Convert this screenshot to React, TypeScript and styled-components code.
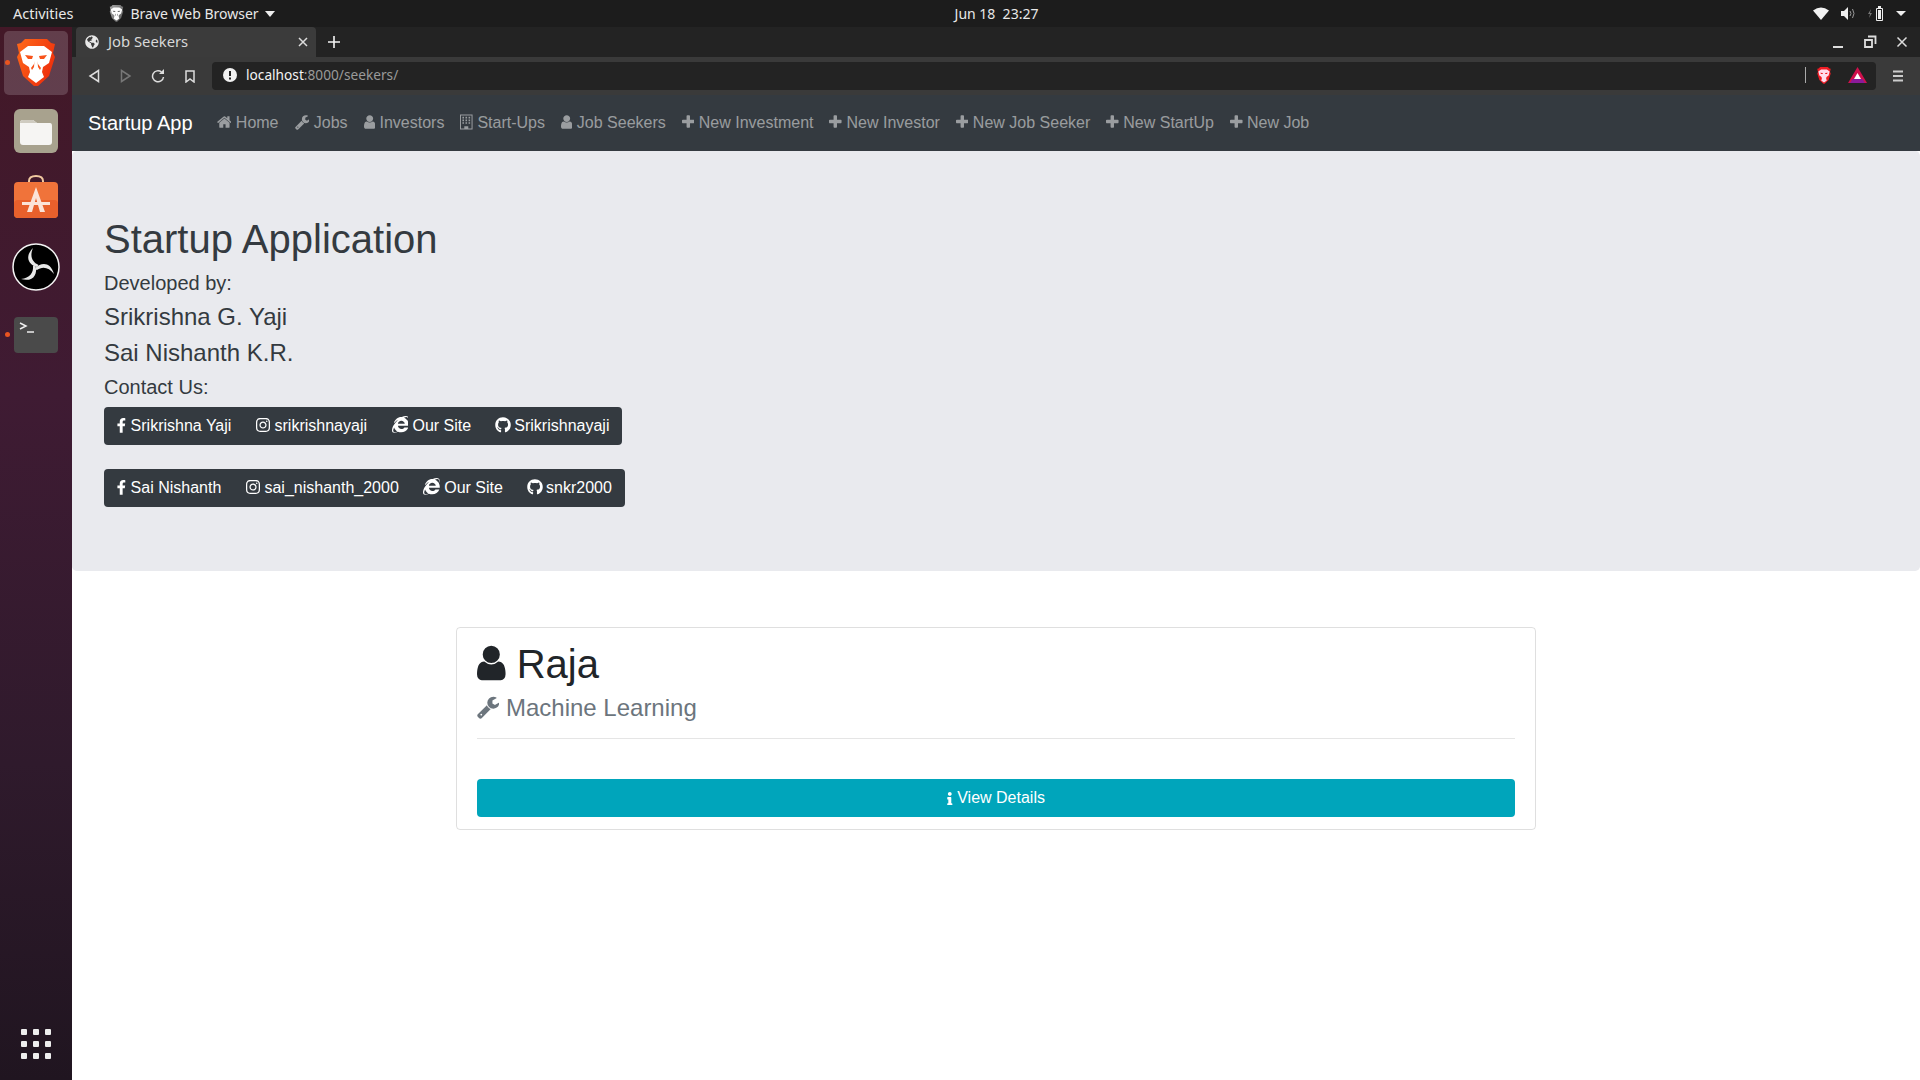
import React from "react";
import styled, { createGlobalStyle } from "styled-components";
import { FaFacebookF, FaInstagram, FaInternetExplorer, FaGithub, FaInfo, FaGlobeAmericas } from "react-icons/fa";

const Global = createGlobalStyle`
  html, body { margin: 0; padding: 0; background: #fff; }
  * { box-sizing: border-box; }
  body { font-family: "Liberation Sans", Arial, sans-serif; font-size: 16px; line-height: 1.5; color: #212529; }
`;

const Screen = styled.div`
  width: 1920px; height: 1080px; overflow: hidden; display: flex; flex-direction: column; background: #fff;
`;
const TopBar = styled.header`
  height: 27px; flex: none; background: #1c1c1c; color: #e8e8e8; display: grid; grid-template-columns: 1fr auto 1fr;
  align-items: center; font-family: "Noto Sans", sans-serif; font-size: 14px; padding: 0 12px 0 13px; line-height: 27px;
`;
const TopLeft = styled.div`display: flex; align-items: center;`;
const Activities = styled.span`font-size: 14.5px;`;
const AppMenu = styled.span`display: inline-flex; align-items: center; gap: 6px; margin-left: 36px;`;
const Clock = styled.div`white-space: pre; font-size: 14px; padding-left: 72px;`;
const TopRight = styled.div`display: flex; justify-content: flex-end; align-items: center; gap: 12px; padding-right: 2px;`;
const Main = styled.div`flex: 1; min-height: 0; display: flex;`;
const Dock = styled.nav`
  width: 72px; flex: none; display: flex; flex-direction: column; align-items: center; position: relative;
  background: linear-gradient(180deg, #431827 0%, #3f1b33 35%, #2f1a2c 70%, #201520 100%); padding-top: 4px;
`;
const DockItem = styled.div<{ $active?: boolean; $h: number }>`
  width: 64px; height: ${p => p.$h}px; display: flex; align-items: center; justify-content: center; border-radius: 5px;
  position: relative; background: ${p => p.$active ? "rgba(255,255,255,.17)" : "transparent"};
`;
const RunDot = styled.span`
  position: absolute; left: 1px; top: 50%; margin-top: -3px; width: 5px; height: 5px; border-radius: 50%; background: #e95420;
`;
const DockSpacer = styled.div`flex: 1;`;
const AppGrid = styled.div`
  display: grid; grid-template-columns: repeat(3, 6px); gap: 6px; margin-bottom: 21px;
`;
const AppDot = styled.span`width: 6px; height: 6px; border-radius: 1px; background: #eee;`;
const Browser = styled.div`flex: 1; min-width: 0; display: flex; flex-direction: column;`;
const TabStrip = styled.div`
  height: 30px; flex: none; background: #232323; display: flex; align-items: stretch; padding-left: 4px; color: #ddd;
  font-family: "Noto Sans", sans-serif; font-size: 14.8px;
`;
const Tab = styled.div`
  width: 240px; background: #3b3b3b; border-radius: 4px 4px 0 0; display: flex; align-items: center; padding: 0 6px 1px 9px; gap: 9px;
`;
const TabTitle = styled.span`flex: 1; color: #d8d8d8;`;
const NewTab = styled.div`width: 36px; display: flex; align-items: center; justify-content: center;`;
const WindowControls = styled.div`margin-left: auto; display: flex; align-items: center; gap: 18px; padding-right: 11px;`;
const Toolbar = styled.div`
  height: 38px; flex: none; background: #3a3a3a; display: flex; align-items: center; padding: 0 0 0 6px;
`;
const ToolBtn = styled.span`width: 32px; display: flex; align-items: center; justify-content: center;`;
const MenuBtn = styled.span`width: 44px; display: flex; align-items: center; justify-content: center;`;
const ToolNav = styled.div`display: flex; margin-right: 6px;`;
const UrlBar = styled.div`
  flex: 1; height: 28px; background: #232323; border-radius: 4px; display: flex; align-items: center; padding: 0 9px 2px 11px;
  font-family: "Noto Sans", sans-serif; font-size: 13.7px; color: #f2f2f2; gap: 9px;
`;
const Host = styled.span`flex: 1; color: #f4f4f4; span { color: #9a9a9a; }`;
const UrlSep = styled.span`width: 1px; height: 16px; background: #aaa; margin-right: 1px;`;
const UrlIcons = styled.div`display: flex; align-items: center; gap: 16px;`;
const Page = styled.div`flex: 1; min-height: 0; background: #fff;`;
const Navbar = styled.div`
  height: 56px; background: #343a40; display: flex; align-items: center; padding: 8px 16px;
`;
const Brand = styled.a`font-size: 20px; color: #fff; margin-right: 16px; line-height: 30px; white-space: nowrap;`;
const NavLink = styled.a`padding: 8px; color: rgba(255,255,255,.5); white-space: nowrap;`;
const Jumbotron = styled.section`
  background: #e9eaee; padding: 64px 32px; border-radius: 4.8px; margin-bottom: 56px; color: #343a40;
`;
const H1 = styled.h1`margin: 0 0 8px; font-size: 40px; font-weight: 500; line-height: 1.2;`;
const H4 = styled.h4`margin: 0 0 7px; font-size: 24px; font-weight: 500; line-height: 1.2;`;
const H5 = styled.h5`margin: 0 0 8px; font-size: 20px; font-weight: 500; line-height: 1.2;`;
const Groups = styled.div`display: flex; flex-direction: column; align-items: flex-start; gap: 24px;`;
const BtnGroup = styled.div`display: inline-flex; background: #343a40; border-radius: 4px;`;
const DarkBtn = styled.a`
  color: #fff; padding: 6px 12px; border: 1px solid transparent; line-height: 24px; white-space: nowrap;
  margin-left: -1px; &:first-child { margin-left: 0; }
`;
const Card = styled.article`
  width: 1080px; margin: 0 auto; border: 1px solid rgba(0,0,0,.125); border-radius: 4px; padding: 12px 20px 12px;
`;
const CardTitle = styled.h1`margin: 0 0 6px; font-size: 40px; font-weight: 500; line-height: 1.2; color: #212529;`;
const CardSub = styled.h4`margin: 0; font-size: 24px; font-weight: 500; line-height: 1.2; color: #6c757d;`;
const Rule = styled.hr`border: 0; border-top: 1px solid rgba(0,0,0,.1); margin: 16px 0 40px;`;
const InfoBtn = styled.a`
  display: block; background: #00a5bb; color: #fff; text-align: center; border-radius: 4px; padding: 7px 12px; line-height: 24px; height: 38px;
`;
const IconBox = styled.span<{ $adv: number }>`
  display: inline-flex; justify-content: center; align-items: center; width: ${p => p.$adv / 1792}em; height: 1em; vertical-align: -0.125em;
  svg { flex: none; display: block; }
`;

const glyphs = {
  home: { adv: 1664, d: "M1472 992v480q0 26-19 45t-45 19h-384v-384h-256v384h-384q-26 0-45-19t-19-45v-480q0-1 .5-3t.5-3l575-474 575 474q1 2 1 6zm223-69l-62 74q-8 9-21 11h-3q-13 0-21-7l-692-577-692 577q-12 8-24 7-13-2-21-11l-62-74q-8-10-7-23.5t11-21.5l719-599q32-26 76-26t76 26l244 204v-195q0-14 9-23t23-9h192q14 0 23 9t9 23v408l219 182q10 8 11 21.5t-7 23.5z" },
  wrench: { adv: 1664, d: "M448 1472q0-26-19-45t-45-19-45 19-19 45 19 45 45 19 45-19 19-45zm644-420l-682 682q-37 37-90 37-52 0-91-37l-106-108q-38-36-38-90 0-53 38-91l681-681q39 98 114.5 173.5t173.5 114.5zm634-435q0 39-23 106-47 134-164.5 217.5t-258.5 83.5q-185 0-316.5-131.5t-131.5-316.5 131.5-316.5 316.5-131.5q58 0 121.5 16.5t107.5 46.5q16 11 16 28t-16 28l-293 169v224l193 107q5-3 79-48.5t135.5-81 70.5-35.5q15 0 23.5 10t8.5 25z" },
  user: { adv: 1280, d: "M1536 1399q0 109-62.5 187t-150.5 78h-854q-88 0-150.5-78t-62.5-187q0-85 8.5-160.5t31.5-152 58.5-131 94-89 134.5-34.5q131 128 313 128t313-128q76 0 134.5 34.5t94 89 58.5 131 31.5 152 8.5 160.5zm-256-887q0 159-112.5 271.5t-271.5 112.5-271.5-112.5-112.5-271.5 112.5-271.5 271.5-112.5 271.5 112.5 112.5 271.5z" },
  plus: { adv: 1408, d: "M1600 736v192q0 40-28 68t-68 28h-416v416q0 40-28 68t-68 28h-192q-40 0-68-28t-28-68v-416h-416q-40 0-68-28t-28-68v-192q0-40 28-68t68-28h416v-416q0-40 28-68t68-28h192q40 0 68 28t28 68v416h416q40 0 68 28t28 68z" },
  building: { adv: 1408, d: "M192 64h1408v1664H192zM304 176v1440h368v-256h448v256h368V176zM464 320h176v176H464zM808 320h176v176H808zM1152 320h176v176h-176zM464 624h176v176H464zM808 624h176v176H808zM1152 624h176v176h-176zM464 928h176v176H464zM808 928h176v176H808zM1152 928h176v176h-176z" },
};

function Fa({ name }: { name: keyof typeof glyphs }) {
  const g = glyphs[name];
  const x = (1792 - g.adv) / 2;
  return (
    <IconBox $adv={g.adv}>
      <svg viewBox={`${x} 0 ${g.adv} 1792`} width="100%" height="1em" fill="currentColor" fillRule="evenodd"><path d={g.d} /></svg>
    </IconBox>
  );
}

function Brandy({ Icon, adv, size = 1 }: { Icon: React.ComponentType<{ size?: string }>; adv: number; size?: number }) {
  return <IconBox $adv={adv}><Icon size={`${size}em`} /></IconBox>;
}

function BraveLogo({ width, height, mono }: { width: number; height: number; mono?: boolean }) {
  const id = mono ? "braveMono" : "braveColor";
  const eye = mono ? "#6f6f6f" : "#f8531a";
  return (
    <svg width={width} height={height} viewBox="0 0 40 48">
      <defs>
        <linearGradient id={id} x1="0" y1="0" x2="1" y2="0.6">
          <stop offset="0" stopColor={mono ? "#a8a8a8" : "#ff6a1a"} />
          <stop offset="1" stopColor={mono ? "#666" : "#ee2f0c"} />
        </linearGradient>
      </defs>
      <path d="M9 0H31L35 4L39 5L37 14L39 18L33 37L22 47H18L7 37L1 18L3 14L1 5L5 4Z" fill={`url(#${id})`} />
      <path d="M12 7H28L36 13L33 24L27 28L26 33L28 38L20 44L12 38L14 33L13 28L7 24L4 13Z" fill="#fff" />
      <path d="M9 16L17 17L16 20L12 20ZM31 16L23 17L24 20L28 20Z" fill={eye} />
      <path d="M15 29L18 25L18.500 22L18 28L16 31ZM25 29L22 25L21.500 22L22 28L24 31Z" fill={eye} />
    </svg>
  );
}

const I = { stroke: "#ddd", fill: "none" };
const obsBlade = "M25 24C17 22 12 14 21 5C17.500 13 20 19 26.500 22Z";

export default function App() {
  return (
    <Screen>
      <Global />
      <TopBar>
        <TopLeft>
          <Activities>Activities</Activities>
          <AppMenu>
            <BraveLogo width={15} height={17} mono />
            <span>Brave Web Browser</span>
            <svg width="10" height="6" viewBox="0 0 10 6"><path d="M0 0h10L5 6z" fill="#eee" /></svg>
          </AppMenu>
        </TopLeft>
        <Clock>{"Jun 18  23:27"}</Clock>
        <TopRight>
          <svg width="16" height="13" viewBox="0 0 16 13"><path d="M0 3.5Q8-2.500 16 3.500L8 13z" fill="#f2f2f2" /></svg>
          <svg width="15" height="13" viewBox="0 0 15 13"><path d="M0 4h3l4-4v13l-4-4H0z" fill="#eee" /><path d="M9 4q2 2.500 0 5M11.500 2q3 4.500 0 9" stroke="#999" fill="none" /></svg>
          <svg width="16" height="15" viewBox="0 0 16 15"><path d="M3 3L0 8h2l-1 4 3-5H2z" fill="#777" /><path d="M8.500 2.500h6v12h-6z" stroke="#eee" fill="none" /><path d="M10 0h3v2h-3zM10 4h3v9h-3z" fill="#eee" /></svg>
          <svg width="10" height="5" viewBox="0 0 10 5"><path d="M0 0h10L5 5z" fill="#eee" /></svg>
        </TopRight>
      </TopBar>
      <Main>
        <Dock>
          <DockItem $active $h={64}>
            <RunDot />
            <BraveLogo width={40} height={48} />
          </DockItem>
          <DockItem $h={72}>
            <svg width="44" height="44" viewBox="0 0 44 44">
              <rect width="44" height="44" rx="6" fill="#a8a28e" />
              <path d="M6 14q0-3 3-3h10l4 3h13q2 0 2 3v16q0 3-3 3H9q-3 0-3-3z" fill="#f6f5f3" />
              <path d="M6 14q0-3 3-3h10l4 3z" fill="#cfcbc0" />
            </svg>
          </DockItem>
          <DockItem $h={60}>
            <svg width="44" height="46" viewBox="0 0 44 46">
              <path d="M15 10V7q0-5 7-5t7 5v3" fill="none" stroke="#f0c9a0" strokeWidth="2" />
              <rect y="8" width="44" height="36" rx="4" fill="#f0733a" />
              <rect y="26" width="44" height="18" rx="4" fill="#e8602c" />
              <path d="M22 13l9 25h-5l-4-14-4 14h-5z" fill="#fbe3d8" />
              <path d="M8 28h28v3H8z" fill="#fbe3d8" />
            </svg>
          </DockItem>
          <DockItem $h={80}>
            <svg width="48" height="48" viewBox="0 0 48 48">
              <circle cx="24" cy="24" r="23" fill="#000" stroke="#f4f4f4" strokeWidth="1.500" />
              <path d={obsBlade} fill="#e8e8e8" />
              <path d={obsBlade} fill="#e8e8e8" transform="rotate(120 24 24)" />
              <path d={obsBlade} fill="#e8e8e8" transform="rotate(240 24 24)" />
            </svg>
          </DockItem>
          <DockItem $h={56}>
            <RunDot />
            <svg width="44" height="36" viewBox="0 0 44 36">
              <rect width="44" height="36" rx="4" fill="#4a4a4a" />
              <path d="M6 6l6 3-6 3" fill="none" stroke="#eee" strokeWidth="1.500" />
              <path d="M13 15h7" stroke="#eee" strokeWidth="1.500" />
            </svg>
          </DockItem>
          <DockSpacer />
          <AppGrid>{Array.from({ length: 9 }, (_, i) => <AppDot key={i} />)}</AppGrid>
        </Dock>
        <Browser>
          <TabStrip>
            <Tab>
              <FaGlobeAmericas size={14} color="#e8e8e8" />
              <TabTitle>Job Seekers</TabTitle>
              <svg width="14" height="14" viewBox="0 0 14 14"><path d="M3 3l8 8M11 3l-8 8" stroke="#ddd" strokeWidth="1.500" /></svg>
            </Tab>
            <NewTab><svg width="12" height="12" viewBox="0 0 12 12"><path d="M6 0v12M0 6h12" stroke="#f4f4f4" strokeWidth="1.600" /></svg></NewTab>
            <WindowControls>
              <svg width="14" height="14" viewBox="0 0 14 14"><path d="M2 12h10" stroke="#ddd" strokeWidth="2" /></svg>
              <svg width="14" height="14" viewBox="0 0 14 14"><path d="M5 1.500h7.500V9M2 5h7v7H2z" stroke="#ddd" strokeWidth="1.800" fill="none" /></svg>
              <svg width="14" height="14" viewBox="0 0 14 14"><path d="M2.500 2.500l9 9M11.500 2.500l-9 9" stroke="#ddd" strokeWidth="1.500" /></svg>
            </WindowControls>
          </TabStrip>
          <Toolbar>
            <ToolNav>
              <ToolBtn><svg width="12" height="14" viewBox="0 0 12 14"><path d="M10.500 1.500v11L2 7z" {...I} strokeWidth="1.500" /></svg></ToolBtn>
              <ToolBtn><svg width="12" height="14" viewBox="0 0 12 14"><path d="M1.500 1.500v11L10 7z" stroke="#777" fill="none" strokeWidth="1.500" /></svg></ToolBtn>
              <ToolBtn><svg width="14" height="14" viewBox="0 0 14 14"><path d="M12.500 8a5.500 5.500 0 1 1-2-5" {...I} strokeWidth="1.500" /><path d="M13 0v5H8z" fill="#ddd" /></svg></ToolBtn>
              <ToolBtn><svg width="10" height="13" viewBox="0 0 10 13"><path d="M1 1h8v11L5 9l-4 3z" {...I} strokeWidth="1.500" /></svg></ToolBtn>
            </ToolNav>
            <UrlBar>
              <svg width="14" height="14" viewBox="0 0 14 14"><circle cx="7" cy="7" r="7" fill="#f2f2f2" /><path d="M6 3h2v5H6zM6 9.500h2v2H6z" fill="#232323" /></svg>
              <Host>localhost<span>:8000/seekers/</span></Host>
              <UrlSep />
              <UrlIcons>
                <svg width="16" height="17" viewBox="0 0 40 48"><path d="M9 0H31L35 4L39 5L37 14L39 18L33 37L22 47H18L7 37L1 18L3 14L1 5L5 4Z" fill="#ee1c24" /><path d="M12 7H28L36 13L33 24L27 28L26 33L28 38L20 44L12 38L14 33L13 28L7 24L4 13Z" fill="#fde" /><path d="M9 16L17 17L16 20L12 20ZM31 16L23 17L24 20L28 20Z" fill="#ee1c24" /></svg>
                <svg width="19" height="17" viewBox="0 0 19 17"><path d="M9.500 0L19 16H0z" fill="#d0104c" /><path d="M2 16h15l-2.500-4h-10z" fill="#8b1a9a" /><path d="M9.500 6l3.500 6H6z" fill="#fff" /></svg>
              </UrlIcons>
            </UrlBar>
            <MenuBtn><svg width="12" height="12" viewBox="0 0 12 12"><path d="M1 1.500h10M1 6h10M1 10.500h10" stroke="#ccc" strokeWidth="1.800" /></svg></MenuBtn>
          </Toolbar>
          <Page>
            <Navbar>
              <Brand>Startup App</Brand>
              <NavLink><Fa name="home" /> Home</NavLink>
              <NavLink><Fa name="wrench" /> Jobs</NavLink>
              <NavLink><Fa name="user" /> Investors</NavLink>
              <NavLink><Fa name="building" /> Start-Ups</NavLink>
              <NavLink><Fa name="user" /> Job Seekers</NavLink>
              <NavLink><Fa name="plus" /> New Investment</NavLink>
              <NavLink><Fa name="plus" /> New Investor</NavLink>
              <NavLink><Fa name="plus" /> New Job Seeker</NavLink>
              <NavLink><Fa name="plus" /> New StartUp</NavLink>
              <NavLink><Fa name="plus" /> New Job</NavLink>
            </Navbar>
            <Jumbotron>
              <H1>Startup Application</H1>
              <H5>Developed by:</H5>
              <H4>Srikrishna G. Yaji</H4>
              <H4>Sai Nishanth K.R.</H4>
              <H5>Contact Us:</H5>
              <Groups>
                <BtnGroup>
                  <DarkBtn><Brandy Icon={FaFacebookF} adv={1024} size={0.92} /> Srikrishna Yaji</DarkBtn>
                  <DarkBtn><Brandy Icon={FaInstagram} adv={1536} /> srikrishnayaji</DarkBtn>
                  <DarkBtn><Brandy Icon={FaInternetExplorer} adv={1792} size={1.05} /> Our Site</DarkBtn>
                  <DarkBtn><Brandy Icon={FaGithub} adv={1536} /> Srikrishnayaji</DarkBtn>
                </BtnGroup>
                <BtnGroup>
                  <DarkBtn><Brandy Icon={FaFacebookF} adv={1024} size={0.92} /> Sai Nishanth</DarkBtn>
                  <DarkBtn><Brandy Icon={FaInstagram} adv={1536} /> sai_nishanth_2000</DarkBtn>
                  <DarkBtn><Brandy Icon={FaInternetExplorer} adv={1792} size={1.05} /> Our Site</DarkBtn>
                  <DarkBtn><Brandy Icon={FaGithub} adv={1536} /> snkr2000</DarkBtn>
                </BtnGroup>
              </Groups>
            </Jumbotron>
            <Card>
              <CardTitle><Fa name="user" /> Raja</CardTitle>
              <CardSub><Fa name="wrench" /> Machine Learning</CardSub>
              <Rule />
              <InfoBtn><Brandy Icon={FaInfo} adv={640} size={0.85} /> View Details</InfoBtn>
            </Card>
          </Page>
        </Browser>
      </Main>
    </Screen>
  );
}
